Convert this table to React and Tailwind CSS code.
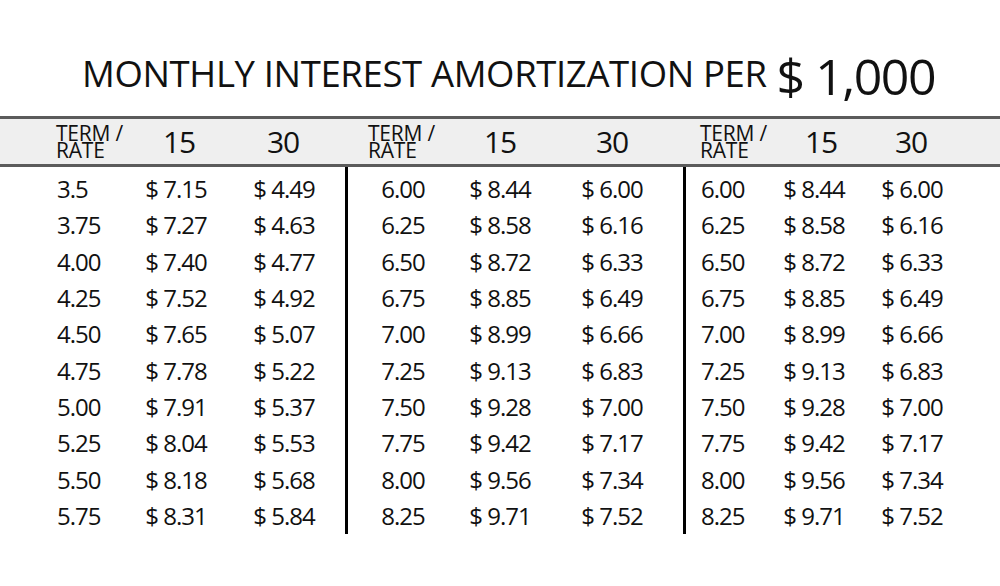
import React from "react";

const low = [
  ["3.5", "7.15", "4.49"],
  ["3.75", "7.27", "4.63"],
  ["4.00", "7.40", "4.77"],
  ["4.25", "7.52", "4.92"],
  ["4.50", "7.65", "5.07"],
  ["4.75", "7.78", "5.22"],
  ["5.00", "7.91", "5.37"],
  ["5.25", "8.04", "5.53"],
  ["5.50", "8.18", "5.68"],
  ["5.75", "8.31", "5.84"],
];

const high = [
  ["6.00", "8.44", "6.00"],
  ["6.25", "8.58", "6.16"],
  ["6.50", "8.72", "6.33"],
  ["6.75", "8.85", "6.49"],
  ["7.00", "8.99", "6.66"],
  ["7.25", "9.13", "6.83"],
  ["7.50", "9.28", "7.00"],
  ["7.75", "9.42", "7.17"],
  ["8.00", "9.56", "7.34"],
  ["8.25", "9.71", "7.52"],
];

// column layout for each of the three blocks
const sections = [
  {
    rows: low,
    wrap: "w-[345px] pl-[57px]",
    head: "w-[345px] pl-[56px]",
    term: "w-[70px] text-left",
    termHead: "w-[70px]",
    c15: "w-[98px]",
    c15Head: "w-[98px] pl-[8px]",
    c30: "w-[118px]",
  },
  {
    rows: high,
    wrap: "w-[338px] border-l-[3px] border-black",
    head: "w-[338px] pl-[3px]",
    term: "w-[110px] text-center",
    termHead: "w-[110px] pl-[20px]",
    c15: "w-[84px]",
    c15Head: "w-[84px]",
    c30: "w-[140px]",
  },
  {
    rows: high,
    wrap: "w-[317px] border-l-[3px] border-black pl-[15px]",
    head: "w-[317px] pl-[17px]",
    term: "w-[60px] text-left",
    termHead: "w-[60px]",
    c15: "w-[106px]",
    c15Head: "w-[106px] pl-[16px]",
    c30: "w-[90px]",
  },
];

function TermRate() {
  return (
    <div className="text-[21px] leading-[17px] tracking-[-0.01em] whitespace-nowrap">
      <div>TERM /</div>
      <div>RATE</div>
    </div>
  );
}

export default function App() {
  return (
    <div className="w-[1000px] h-[586px] bg-white text-[#111] font-['Open_Sans',sans-serif] overflow-hidden">
      <div className="h-[116px] pl-[82px] pt-[51px] text-[36.5px] leading-[37px] tracking-[-0.01em] whitespace-nowrap">
        MONTHLY INTEREST AMORTIZATION PER
        <span className="ml-[10px] text-[50px] leading-none align-[-8px] tracking-[-0.03em]">
          $ 1,000
        </span>
      </div>

      <div className="flex h-[51px] border-y-[3px] border-[#5b5b5b] bg-[#efefef]">
        {sections.map((s, i) => (
          <div key={i} className={`flex items-center ${s.head}`}>
            <div className={s.termHead}>
              <TermRate />
            </div>
            <div className={`${s.c15Head} text-center text-[30px] tracking-[-0.04em]`}>15</div>
            <div className={`${s.c30} text-center text-[30px] tracking-[-0.04em]`}>30</div>
          </div>
        ))}
      </div>

      <div className="flex">
        {sections.map((s, i) => (
          <div key={i} className={`pt-[4px] ${s.wrap}`}>
            {s.rows.map((r) => (
              <div key={r[0]} className="flex h-[36.3px] items-center text-[24px] tracking-[-0.04em]">
                <div className={s.term}>{r[0]}</div>
                <div className={`${s.c15} text-center`}>$ {r[1]}</div>
                <div className={`${s.c30} text-center`}>$ {r[2]}</div>
              </div>
            ))}
          </div>
        ))}
      </div>
    </div>
  );
}
